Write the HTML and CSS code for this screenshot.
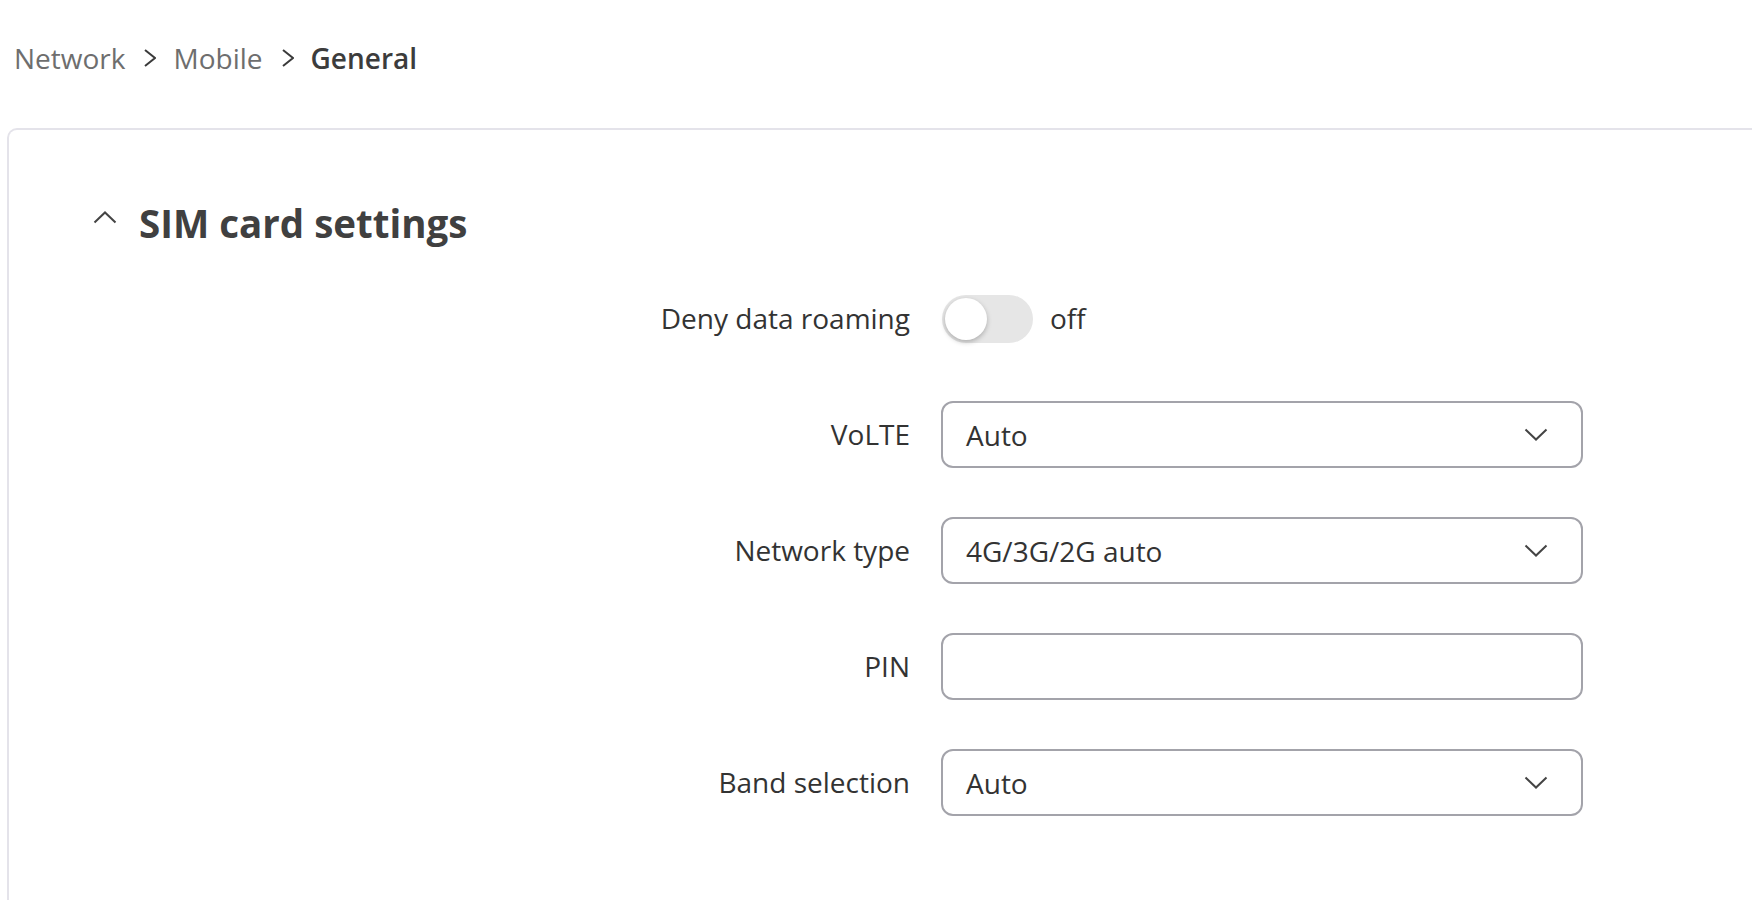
FILE: index.html
```html
<!DOCTYPE html>
<html lang="en">
<head>
<meta charset="utf-8">
<title>Mobile - General</title>
<link rel="stylesheet" href="styles.css">
</head>
<body>
<nav class="breadcrumb">
  <span class="crumb">Network</span>
  <svg class="sep" viewBox="0 0 12 18" width="12" height="18"><path d="M1 1 L11 9 L1 17" fill="none" stroke="#3a3a3a" stroke-width="2"/></svg>
  <span class="crumb">Mobile</span>
  <svg class="sep" viewBox="0 0 12 18" width="12" height="18"><path d="M1 1 L11 9 L1 17" fill="none" stroke="#3a3a3a" stroke-width="2"/></svg>
  <span class="crumb current">General</span>
</nav>
<section class="card">
  <header class="section-head">
    <svg class="collapse" viewBox="0 0 24 13" width="24" height="13"><path d="M1.5 11.5 L12 1.5 L22.5 11.5" fill="none" stroke="#444" stroke-width="2"/></svg>
    <h2>SIM card settings</h2>
  </header>
  <div class="form">
    <div class="row">
      <label class="label">Deny data roaming</label>
      <div class="control">
        <span class="switch"><span class="knob"></span></span>
        <span class="state">off</span>
      </div>
    </div>
    <div class="row">
      <label class="label">VoLTE</label>
      <div class="field select"><span class="value">Auto</span>
        <svg class="caret" viewBox="0 0 24 13" width="24" height="13"><path d="M1.5 1.5 L12 11.5 L22.5 1.5" fill="none" stroke="#444" stroke-width="2"/></svg></div>
    </div>
    <div class="row">
      <label class="label">Network type</label>
      <div class="field select"><span class="value">4G/3G/2G auto</span>
        <svg class="caret" viewBox="0 0 24 13" width="24" height="13"><path d="M1.5 1.5 L12 11.5 L22.5 1.5" fill="none" stroke="#444" stroke-width="2"/></svg></div>
    </div>
    <div class="row">
      <label class="label">PIN</label>
      <div class="field"></div>
    </div>
    <div class="row">
      <label class="label">Band selection</label>
      <div class="field select"><span class="value">Auto</span>
        <svg class="caret" viewBox="0 0 24 13" width="24" height="13"><path d="M1.5 1.5 L12 11.5 L22.5 1.5" fill="none" stroke="#444" stroke-width="2"/></svg></div>
    </div>
  </div>
</section>
</body>
</html>
```
FILE: styles.css
```css
html, body {
  margin: 0;
  padding: 0;
  background: #ffffff;
  overflow: hidden;
}
body {
  font-family: "Open Sans", "Liberation Sans", sans-serif;
  color: #333333;
  height: 900px;
  display: flex;
  flex-direction: column;
}
.breadcrumb {
  display: flex;
  align-items: center;
  padding: 39px 0 0 14px;
  height: 38px;
  font-size: 28px;
  line-height: 38px;
  flex: none;
}
.crumb {
  color: #6e6e6e;
}
.crumb.current {
  color: #3c3c3c;
  font-weight: 600;
}
.sep {
  margin: 0 17px 0 19px;
}
.card {
  flex: 1;
  margin: 51px -40px 0 7px;
  border: 2px solid #e4e3ea;
  border-bottom: none;
  border-radius: 10px 10px 0 0;
  background: #fff;
  padding-top: 67px;
}
.section-head {
  display: flex;
  align-items: center;
  padding-left: 84px;
  height: 52px;
}
.collapse {
  margin-right: 22px;
  margin-top: -12px;
}
.section-head h2 {
  margin: 0;
  font-size: 38.5px;
  line-height: 52px;
  font-weight: 700;
  color: #404040;
}
.form {
  margin-top: 36px;
  display: flex;
  flex-direction: column;
  gap: 49px;
}
.row {
  display: grid;
  grid-template-columns: 901px 642px;
  column-gap: 31px;
  align-items: center;
  height: 67px;
}
.label {
  text-align: right;
  font-size: 28px;
  line-height: 36px;
  padding-bottom: 2px;
  color: #333;
}
.control {
  display: flex;
  align-items: center;
  gap: 17px;
  padding-left: 1px;
}
.switch {
  width: 91px;
  height: 48px;
  border-radius: 24px;
  background: #e6e6e6;
  display: flex;
  align-items: center;
  padding-left: 3px;
  box-sizing: border-box;
}
.knob {
  width: 42px;
  height: 42px;
  border-radius: 50%;
  background: #fff;
  box-shadow: 0 2px 5px rgba(0,0,0,0.25);
}
.state {
  font-size: 28px;
  line-height: 36px;
  padding-bottom: 2px;
  color: #333;
}
.field {
  box-sizing: border-box;
  height: 67px;
  border: 2px solid #a3a3aa;
  border-radius: 12px;
  display: flex;
  align-items: center;
  justify-content: space-between;
  padding: 0 33px 0 23px;
  font-size: 28px;
  color: #333;
}
.caret {
  display: block;
}
```
